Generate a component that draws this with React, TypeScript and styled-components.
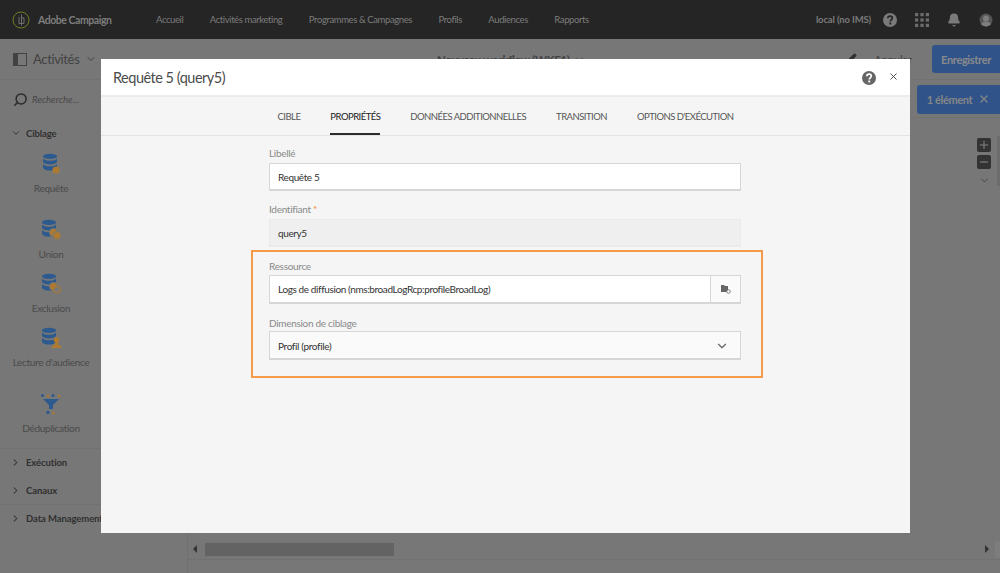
import React from "react";
import styled, { createGlobalStyle } from "styled-components";
import { ChevronDown, ChevronRight, X, Search, Pencil, Bell, Plus, Minus } from "lucide-react";

const FONT = `Lato, "Open Sans", "Liberation Sans", sans-serif`;
const BLUE = "#30548a";
const ICON_BLUE = "#2c5a8e";
const O = "#ad7a30";
const BG = "#777777";
const LINE = "#717171";

const Global = createGlobalStyle`
  html, body { margin: 0; padding: 0; background: ${BG}; }
  * { box-sizing: border-box; }
  body { font-family: ${FONT}; }
`;

const Page = styled.div`
  position: relative;
  width: 1000px;
  height: 573px;
  overflow: hidden;
  background: ${BG};
  display: flex;
  flex-direction: column;
`;

const TopBar = styled.header`
  height: 39px;
  flex: none;
  background: #252525;
  display: flex;
  align-items: center;
  padding: 0 7px 0 12px;
`;
const Logo = styled.div`
  display: flex;
  align-items: center;
  gap: 8px;
  width: 144px;
  font-size: 10.5px;
  letter-spacing: -0.45px;
  font-weight: 700;
  color: #7d7d7d;
`;
const Nav = styled.nav`
  display: flex;
  gap: 26.5px;
  font-size: 9.5px;
  letter-spacing: -0.4px;
  color: #7c7c7c;
  flex: 1;
`;
const UserZone = styled.div`
  display: flex;
  align-items: center;
  font-size: 9.5px;
  letter-spacing: -0.15px;
  font-weight: 700;
  color: #7a7a7a;
  gap: 18px;
`;
const Tenant = styled.span`
  margin-right: -6px;
`;
const TopIcon = styled.span`
  display: flex;
  width: 14px;
  height: 14px;
`;

const SubBar = styled.div`
  height: 41px;
  flex: none;
  display: flex;
  align-items: center;
  border-bottom: 1px solid ${LINE};
`;
const ActivityTitle = styled.div`
  width: 437px;
  padding-left: 13px;
  display: flex;
  align-items: center;
  gap: 6px;
  font-size: 13px;
  letter-spacing: -0.35px;
  color: #424242;
`;
const WorkflowTitle = styled.div`
  flex: 1;
  display: flex;
  align-items: center;
  gap: 4px;
  font-size: 11.5px;
  letter-spacing: -0.3px;
  font-weight: 700;
  color: #424242;
`;
const CancelLink = styled.span`
  font-size: 11.5px;
  letter-spacing: -0.3px;
  color: #424242;
  margin: 0 20px 0 17px;
`;
const PrimaryButton = styled.button`
  height: 28px;
  width: 68px;
  border: none;
  border-radius: 3px 0 0 3px;
  background: ${BLUE};
  color: #8a8a8a;
  font: 700 11px ${FONT};
  letter-spacing: -0.35px;
  padding: 0;
`;

const Main = styled.div`
  flex: 1;
  display: flex;
  min-height: 0;
`;
const Sidebar = styled.aside`
  width: 188px;
  flex: none;
  border-right: 1px solid ${LINE};
  position: relative;
`;
const SearchRow = styled.div`
  height: 39px;
  display: flex;
  align-items: center;
  gap: 4px;
  padding-left: 13px;
  font-size: 9.5px;
  font-style: italic;
  color: #474747;
`;
const Category = styled.div<{ $line?: boolean }>`
  display: flex;
  align-items: center;
  gap: 5px;
  height: 28px;
  padding-left: 11px;
  font-size: 9.5px;
  letter-spacing: -0.1px;
  font-weight: 700;
  color: #303030;
  white-space: nowrap;
  border-top: ${(p) => (p.$line ? `1px solid ${LINE}` : "none")};
`;
const ActivityList = styled.div`
  width: 102px;
  display: flex;
  flex-direction: column;
  align-items: center;
`;
const Activity = styled.div<{ $height: number; $pad: number }>`
  height: ${(p) => p.$height}px;
  padding-top: ${(p) => p.$pad}px;
  display: flex;
  flex-direction: column;
  align-items: center;
  font-size: 10px;
  letter-spacing: -0.3px;
  color: #4a4a4a;
  white-space: nowrap;
`;
const ActivityIcon = styled.svg`
  width: 24px;
  height: 22px;
  margin-bottom: 7px;
  display: block;
`;

const Canvas = styled.div`
  flex: 1;
  display: flex;
  flex-direction: column;
  min-width: 0;
`;
const CanvasBar = styled.div`
  height: 38px;
  flex: none;
  display: flex;
  justify-content: flex-end;
  align-items: center;
  padding-top: 1px;
  border-bottom: 1px solid ${LINE};
`;
const CountButton = styled.button`
  width: 83px;
  height: 29px;
  border: none;
  border-radius: 3px 0 0 3px;
  background: ${BLUE};
  color: #868686;
  font: 700 11px ${FONT};
  letter-spacing: -0.35px;
  display: flex;
  align-items: center;
  justify-content: center;
  gap: 6px;
  padding: 0;
`;
const CanvasBody = styled.div`
  flex: 1;
  display: flex;
  justify-content: flex-end;
`;
const ZoomColumn = styled.div`
  width: 14px;
  margin: 20px 6px 0 0;
  display: flex;
  flex-direction: column;
  align-items: center;
  gap: 3px;
`;
const ZoomButton = styled.span`
  width: 14px;
  height: 14px;
  border-radius: 2px;
  background: #333;
  color: #6e6e6e;
  display: flex;
  align-items: center;
  justify-content: center;
`;
const ZoomMore = styled.span`
  display: flex;
  margin-top: 3px;
`;
const RightTrack = styled.div`
  width: 3px;
  height: 50px;
  margin-top: 18px;
  background: #6c6c6c;
`;
const HScroll = styled.div`
  height: 26px;
  flex: none;
  margin-bottom: 13px;
  padding-top: 5px;
  display: flex;
  align-items: center;
  border-bottom: 1px solid ${LINE};
`;
const Arrow = styled.i<{ $right?: boolean }>`
  width: 0;
  height: 0;
  border-top: 4px solid transparent;
  border-bottom: 4px solid transparent;
  ${(p) => (p.$right ? "border-left: 4px solid #333;" : "border-right: 4px solid #333;")}
  margin: ${(p) => (p.$right ? "0 6px 0 auto" : "0 8px 0 5px")};
`;
const Thumb = styled.div`
  width: 189px;
  height: 13px;
  background: #636363;
`;
const ThumbEnd = styled.div`
  width: 5px;
  height: 17px;
  background: #7d7d7d;
`;

const Modal = styled.section`
  position: absolute;
  left: 101px;
  top: 59px;
  width: 809px;
  height: 474px;
  background: #f5f5f5;
  display: flex;
  flex-direction: column;
`;
const ModalHeader = styled.div`
  height: 38px;
  flex: none;
  background: #fff;
  border-bottom: 2px solid #ececec;
  display: flex;
  align-items: center;
  padding: 0 11px 0 12px;
  color: #4b4b4b;
`;
const ModalTitle = styled.h2`
  flex: 1;
  margin: 0;
  font: 400 14.5px ${FONT};
  letter-spacing: -0.5px;
`;
const HelpDot = styled.span`
  display: flex;
  margin: 2px 12px 0 0;
`;
const CloseMark = styled.span`
  display: flex;
  margin-bottom: 2px;
`;
const Tabs = styled.div`
  height: 39px;
  flex: none;
  display: flex;
  justify-content: center;
  gap: 30px;
  border-bottom: 1px solid #e3e3e3;
`;
const Tab = styled.div<{ $active?: boolean }>`
  height: 38px;
  display: flex;
  align-items: center;
  font-size: 9.5px;
  letter-spacing: -0.53px;
  font-weight: 400;
  color: ${(p) => (p.$active ? "#222" : "#555")};
  border-bottom: 2px solid ${(p) => (p.$active ? "#2c2c2c" : "transparent")};
  padding-top: 2px;
`;
const Form = styled.div`
  position: relative;
  width: 472px;
  margin-left: 168px;
  padding-top: 11px;
`;
const Label = styled.label<{ $top?: number; $h?: number }>`
  display: block;
  height: ${(p) => p.$h ?? 16}px;
  font-size: 10px;
  letter-spacing: -0.3px;
  line-height: 12px;
  color: #8a8a8a;
  margin-top: ${(p) => p.$top ?? 0}px;
`;
const Star = styled.span`
  color: #ee8a2c;
`;
const Input = styled.div<{ $disabled?: boolean }>`
  height: 28px;
  display: flex;
  align-items: center;
  padding-left: 8px;
  font-size: 10px;
  letter-spacing: -0.39px;
  color: #333;
  background: ${(p) => (p.$disabled ? "#efefef" : "#fff")};
  border: 1px solid ${(p) => (p.$disabled ? "#eaeaea" : "#d6d6d6")};
  border-bottom-width: 2px;
  border-radius: 1px;
`;
const PickerRow = styled.div`
  display: flex;
  height: 29px;
`;
const PickerInput = styled(Input)`
  flex: 1;
  height: 29px;
  border-right: none;
`;
const PickerButton = styled.span`
  width: 31px;
  flex: none;
  display: flex;
  align-items: center;
  justify-content: center;
  background: #fafafa;
  border: 1px solid #d6d6d6;
  border-bottom-width: 2px;
`;
const Select = styled.div`
  height: 29px;
  display: flex;
  align-items: center;
  justify-content: space-between;
  padding: 1px 11px 0 8px;
  font-size: 10px;
  letter-spacing: -0.35px;
  color: #333;
  background: #fafafa;
  border: 1px solid #d6d6d6;
  border-bottom-width: 2px;
`;
const Highlight = styled.div`
  position: absolute;
  left: -18px;
  top: 114px;
  width: 512px;
  height: 128px;
  border: 2px solid #f59a49;
  pointer-events: none;
`;

const Db = ({ dx = 0 }: { dx?: number }) => (
  <g transform={`translate(${dx} 0)`} fill={ICON_BLUE}>
    <ellipse cx="9" cy="3.4" rx="7" ry="2.6" />
    <path d="M2 5.4c1.2 1.5 3.8 2.3 7 2.3s5.8-.8 7-2.3V9c-1 1.6-3.8 2.5-7 2.5S3 10.600 2 9z" />
    <path d="M2 11c1.2 1.500 3.800 2.300 7 2.300s5.800-.8 7-2.300v4c-1 1.600-3.800 2.600-7 2.600S3 16.600 2 15z" />
  </g>
);

const IconRequete = () => (
  <ActivityIcon viewBox="0 0 24 22">
    <Db dx={2} />
    <circle cx="17" cy="17" r="3.500" fill={O} />
  </ActivityIcon>
);
const IconUnion = () => (
  <ActivityIcon viewBox="0 0 24 22">
    <Db dx={1} />
    <circle cx="14.500" cy="13.500" r="4" fill={O} stroke={BG} strokeWidth="1" />
    <circle cx="18" cy="16.500" r="4" fill={O} stroke={BG} strokeWidth="1" />
  </ActivityIcon>
);
const IconExclusion = () => (
  <ActivityIcon viewBox="0 0 24 22">
    <Db dx={1} />
    <circle cx="14.500" cy="13.500" r="4" fill={O} stroke={BG} strokeWidth="1" />
    <circle cx="18" cy="16.500" r="3.200" fill={BG} stroke={O} strokeWidth="1.100" />
  </ActivityIcon>
);
const IconAudience = () => (
  <ActivityIcon viewBox="0 0 24 22">
    <Db dx={1} />
    <circle cx="17.500" cy="13" r="2.800" fill={O} />
    <path d="M16 15h3v2.500l3 1V21h-9v-2.500l3-1z" fill={O} />
  </ActivityIcon>
);
const IconDedup = () => (
  <ActivityIcon viewBox="0 0 24 22">
    <circle cx="3.500" cy="2.500" r="1.500" fill={ICON_BLUE} />
    <path d="M9 1l1.700 3H7.300z" fill={O} />
    <circle cx="14" cy="2.500" r="1.500" fill={ICON_BLUE} />
    <path d="M20 1l1.700 3h-3.400z" fill={O} />
    <path d="M4 6h16l-6 6v4h-4v-4z" fill={ICON_BLUE} />
    <circle cx="9" cy="19.500" r="1.700" fill={ICON_BLUE} />
    <path d="M14.500 18l1.800 3h-3.600z" fill={O} />
  </ActivityIcon>
);

const HelpIcon = ({ size, bg, fg }: { size: number; bg: string; fg: string }) => (
  <svg width={size} height={size} viewBox="0 0 14 14">
    <circle cx="7" cy="7" r="7" fill={bg} />
    <path d="M4.800 5.300C4.900 4 5.900 3.200 7.100 3.200c1.300 0 2.200.8 2.200 1.900 0 1.800-2 1.700-2 3.400" fill="none" stroke={fg} strokeWidth="1.700" />
    <rect x="6.300" y="9.500" width="1.900" height="1.900" fill={fg} />
  </svg>
);

const CategoryChevron = () => <ChevronRight size={11} strokeWidth={2.2} color="#303030" style={{ marginLeft: -1 }} />;

export default function App() {
  return (
    <Page>
      <Global />
      <TopBar>
        <Logo>
          <svg width="18" height="18" viewBox="0 0 18 18">
            <circle cx="9" cy="9" r="8" fill="none" stroke="#6f7f28" strokeWidth="1" />
            <path d="M9.500 3.500v11M7 6v6.500M7 12.500h5V7H9.500" fill="none" stroke="#777" strokeWidth="0.900" />
          </svg>
          Adobe Campaign
        </Logo>
        <Nav>
          <span>Accueil</span>
          <span>Activités marketing</span>
          <span>Programmes &amp; Campagnes</span>
          <span>Profils</span>
          <span>Audiences</span>
          <span>Rapports</span>
        </Nav>
        <UserZone>
          <Tenant>local (no IMS)</Tenant>
          <HelpIcon size={14} bg="#7a7a7a" fg="#252525" />
          <svg width="14" height="14" viewBox="0 0 13 13" fill="#6c6c6c">
            {[0, 5, 10].flatMap((y) =>
              [0, 5, 10].map((x) => <rect key={`${x}-${y}`} x={x} y={y} width="3" height="3" />),
            )}
          </svg>
          <TopIcon>
            <Bell size={14} fill="#7a7a7a" stroke="#7a7a7a" />
          </TopIcon>
          <svg width="14" height="14" viewBox="0 0 14 14">
            <defs>
              <clipPath id="uc">
                <circle cx="7" cy="7" r="6.500" />
              </clipPath>
            </defs>
            <circle cx="7" cy="7" r="6.500" fill="#555" />
            <g clipPath="url(#uc)" fill="#7d7d7d">
              <circle cx="7" cy="5.500" r="3" />
              <ellipse cx="7" cy="13" rx="5.500" ry="4.500" />
            </g>
          </svg>
        </UserZone>
      </TopBar>
      <SubBar>
        <ActivityTitle>
          <svg width="14" height="13" viewBox="0 0 14 13" fill="none" stroke="#424242">
            <rect x="0.500" y="0.500" width="13" height="12" strokeWidth="1" />
            <rect x="1" y="1" width="4" height="11" fill="#424242" stroke="none" />
          </svg>
          Activités
          <ChevronDown size={12} color="#424242" strokeWidth={2} />
        </ActivityTitle>
        <WorkflowTitle>
          Nouveau workflow (WKF1)
          <ChevronDown size={11} color="#424242" />
        </WorkflowTitle>
        <Pencil size={12} color="#333" fill="#333" />
        <CancelLink>Annuler</CancelLink>
        <PrimaryButton>Enregistrer</PrimaryButton>
      </SubBar>
      <Main>
        <Sidebar>
          <SearchRow>
            <Search size={15} color="#2c2c2c" strokeWidth={2.4} style={{ transform: "scaleX(-1)" }} />
            Recherche...
          </SearchRow>
          <Category>
            <ChevronDown size={10} strokeWidth={2.2} color="#303030" />
            Ciblage
          </Category>
          <ActivityList>
            <Activity $height={70} $pad={6}>
              <IconRequete />
              Requête
            </Activity>
            <Activity $height={54} $pad={2}>
              <IconUnion />
              Union
            </Activity>
            <Activity $height={54} $pad={2}>
              <IconExclusion />
              Exclusion
            </Activity>
            <Activity $height={66} $pad={2}>
              <IconAudience />
              Lecture d'audience
            </Activity>
            <Activity $height={57} $pad={2}>
              <IconDedup />
              Déduplication
            </Activity>
          </ActivityList>
          <Category $line>
            <CategoryChevron />
            Exécution
          </Category>
          <Category>
            <CategoryChevron />
            Canaux
          </Category>
          <Category $line>
            <CategoryChevron />
            Data Management
          </Category>
        </Sidebar>
        <Canvas>
          <CanvasBar>
            <CountButton>
              1 élément
              <X size={12} strokeWidth={2.4} />
            </CountButton>
          </CanvasBar>
          <CanvasBody>
            <ZoomColumn>
              <ZoomButton>
                <Plus size={12} strokeWidth={3} />
              </ZoomButton>
              <ZoomButton>
                <Minus size={12} strokeWidth={3} />
              </ZoomButton>
              <ZoomMore>
                <ChevronDown size={11} color="#424242" />
              </ZoomMore>
            </ZoomColumn>
            <RightTrack />
          </CanvasBody>
          <HScroll>
            <Arrow />
            <Thumb />
            <Arrow $right />
            <ThumbEnd />
          </HScroll>
        </Canvas>
      </Main>
      <Modal>
        <ModalHeader>
          <ModalTitle>Requête 5 (query5)</ModalTitle>
          <HelpDot>
            <HelpIcon size={14} bg="#666" fg="#fff" />
          </HelpDot>
          <CloseMark>
            <X size={11} strokeWidth={2} color="#444" />
          </CloseMark>
        </ModalHeader>
        <Tabs>
          <Tab>CIBLE</Tab>
          <Tab $active>PROPRIÉTÉS</Tab>
          <Tab>DONNÉES ADDITIONNELLES</Tab>
          <Tab>TRANSITION</Tab>
          <Tab>OPTIONS D'EXÉCUTION</Tab>
        </Tabs>
        <Form>
          <Label>Libellé</Label>
          <Input>Requête 5</Input>
          <Label $top={12}>
            Identifiant <Star>*</Star>
          </Label>
          <Input $disabled>query5</Input>
          <Label $top={13} $h={15}>Ressource</Label>
          <PickerRow>
            <PickerInput>Logs de diffusion (nms:broadLogRcp:profileBroadLog)</PickerInput>
            <PickerButton>
              <svg width="10" height="10" viewBox="0 0 10 10">
                <path d="M0 1h3l1 1h3v6H0z" fill="#666" />
                <circle cx="7.500" cy="7.500" r="1.800" fill="#fafafa" stroke="#666" strokeWidth="0.800" />
              </svg>
            </PickerButton>
          </PickerRow>
          <Label $top={13} $h={14}>Dimension de ciblage</Label>
          <Select>
            Profil (profile)
            <ChevronDown size={14} color="#666" />
          </Select>
          <Highlight />
        </Form>
      </Modal>
    </Page>
  );
}
